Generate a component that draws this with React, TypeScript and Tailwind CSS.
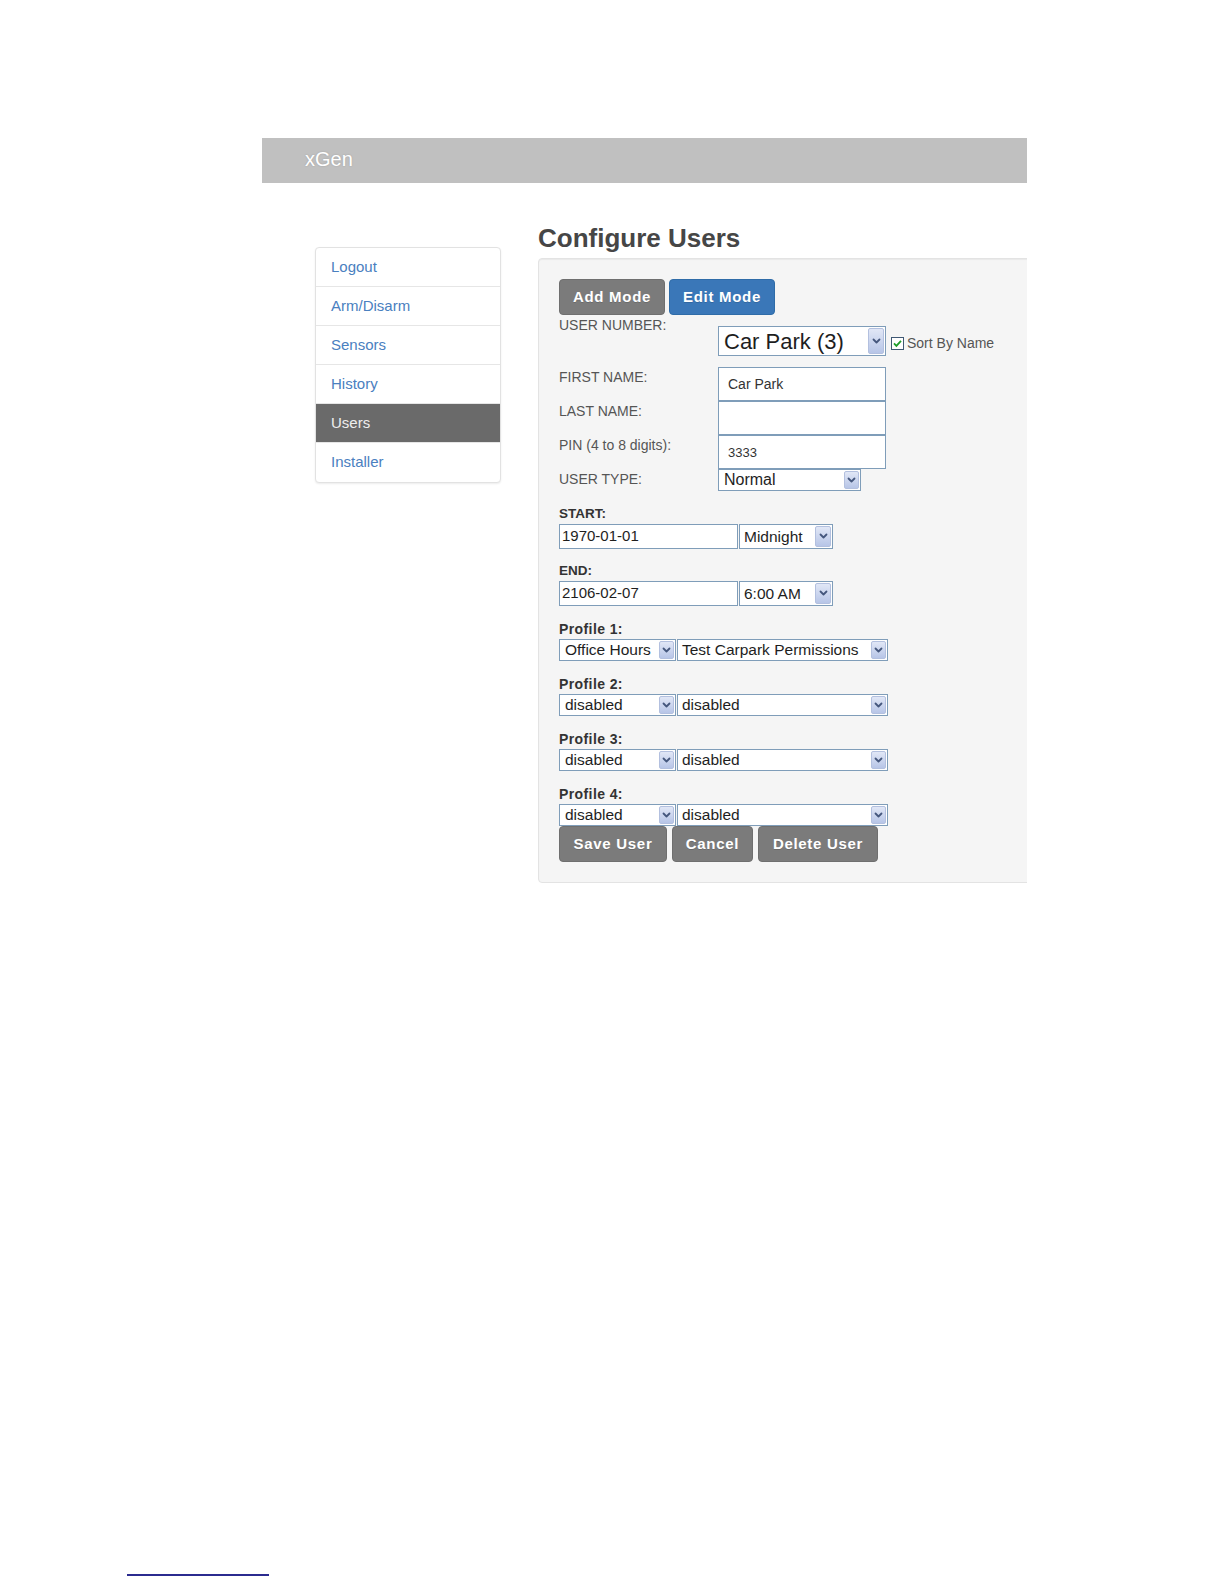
import React from "react";

const Arrow = ({ className }: { className: string }) => (
  <div
    className={`flex items-center justify-center rounded-[2px] border border-[#b3c0df] bg-linear-to-b from-[#e1e7f6] to-[#b7c5e7] ${className}`}
  >
    <svg width="9" height="7" viewBox="0 0 9 7">
      <path
        d="M1.5 1.5 L4.5 4.5 L7.5 1.5"
        fill="none"
        stroke="#45577d"
        strokeWidth="1.8"
        strokeLinecap="round"
        strokeLinejoin="round"
      />
    </svg>
  </div>
);

function Sel({
  className,
  text,
  textClass,
  arrowClass,
}: {
  className: string;
  text: string;
  textClass: string;
  arrowClass: string;
}) {
  return (
    <div className={`flex items-stretch border border-[#7f9db9] bg-white p-px ${className}`}>
      <div className={`flex flex-1 items-center overflow-hidden whitespace-nowrap text-[#1e1e1e] ${textClass}`}>
        {text}
      </div>
      <Arrow className={arrowClass} />
    </div>
  );
}

const Btn = ({ children, className }: { children: React.ReactNode; className: string }) => (
  <div
    className={`flex items-center justify-center rounded-[4px] text-[15px] font-bold tracking-[0.7px] text-white [text-shadow:0_1px_0_rgba(0,0,0,0.15)] ${className}`}
  >
    {children}
  </div>
);

const navItems = ["Logout", "Arm/Disarm", "Sensors", "History", "Users", "Installer"];

function ProfileBlock({ label, a, b }: { label: string; a: string; b: string }) {
  return (
    <div className="mt-[13px]">
      <div className="h-[20px] text-[14px] font-bold leading-[20px] tracking-[0.4px] text-[#333]">{label}</div>
      <div className="flex gap-px">
        <Sel className="h-[22px] w-[117px]" text={a} textClass="pl-[4px] text-[15.5px]" arrowClass="w-[15px]" />
        <Sel className="h-[22px] w-[211px]" text={b} textClass="pl-[3px] text-[15.5px]" arrowClass="w-[15px]" />
      </div>
    </div>
  );
}

function DateBlock({ label, date, time, first }: { label: string; date: string; time: string; first?: boolean }) {
  return (
    <div className={first ? "mt-[13px]" : "mt-[12px]"}>
      <div className="h-[20px] text-[13.5px] font-bold leading-[20px] text-[#333]">{label}</div>
      <div className="flex gap-px">
        <div className="flex h-[25px] w-[179px] items-center border border-[#7f9db9] bg-white pl-[2px] text-[15px] text-[#1e1e1e]">
          {date}
        </div>
        <Sel className="h-[25px] w-[94px]" text={time} textClass="pl-[3px] text-[15.5px]" arrowClass="w-[16px]" />
      </div>
    </div>
  );
}

function InputRow({ label, value, valueClass }: { label: string; value: string; valueClass: string }) {
  return (
    <div className="flex">
      <div className="w-[159px] text-[14px] leading-[20px] text-[#555]">{label}</div>
      <div
        className={`flex h-[34px] w-[168px] items-center border border-[#7f9db9] bg-white pl-[9px] text-[#333] ${valueClass}`}
      >
        {value}
      </div>
    </div>
  );
}

export default function App() {
  return (
    <div className="flex h-[1584px] flex-col bg-white font-['Liberation_Sans',Arial,sans-serif]">
      <div className="ml-[262px] mt-[138px] w-[765px] overflow-hidden">
        <div className="h-[45px] bg-[#c0c0c0] pl-[43px] pt-[11px] text-[20px] leading-[20px] text-white [text-shadow:0_0_2px_rgba(0,0,0,0.18)]">
          xGen
        </div>
        <div className="flex items-start pl-[53px]">
          <nav className="mt-[64px] w-[186px] shrink-0 overflow-hidden rounded-[4px] border border-[#e2e2e2] bg-white shadow-[0_1px_2px_rgba(0,0,0,0.08)]">
            {navItems.map((t, i) => (
              <div
                key={t}
                className={`flex h-[39px] items-center pl-[15px] text-[15px] ${
                  i < navItems.length - 1 ? "border-b border-[#e6e6e6]" : ""
                } ${t === "Users" ? "bg-[#6a6a6a] text-[#eeeeee]" : "text-[#4a80c0]"}`}
              >
                {t}
              </div>
            ))}
          </nav>
          <main className="ml-[37px] mt-[39px] w-[540px] shrink-0">
            <h2 className="text-[26px] font-bold leading-[32px] text-[#464646]">Configure Users</h2>
            <div className="mt-[4px] rounded-[4px] border border-[#e3e3e3] bg-[#f5f5f5] px-[20px] pb-[20px] pt-[20px] shadow-[inset_0_1px_1px_rgba(0,0,0,0.05)]">
              <div className="flex gap-[4px]">
                <Btn className="h-[36px] w-[106px] border border-[#6f6f6f] bg-[#7b7b7b]">Add Mode</Btn>
                <Btn className="h-[36px] w-[106px] border border-[#2f6ca8] bg-[#3a77b8]">Edit Mode</Btn>
              </div>

              <div className="flex h-[52px]">
                <div className="w-[159px] text-[14px] leading-[20px] text-[#555]">USER NUMBER:</div>
                <div className="mt-[11px] flex h-[30px] items-center">
                  <Sel className="h-[30px] w-[168px]" text="Car Park (3)" textClass="pl-[4px] text-[22px]" arrowClass="w-[16px]" />
                  <div className="ml-[5px] mt-[4px] flex items-center">
                    <svg width="13" height="13" viewBox="0 0 13 13">
                      <rect x="0.5" y="0.5" width="12" height="12" fill="#fff" stroke="#3f5873" />
                      <path d="M3 6.4 L5.4 8.9 L10 3.9" fill="none" stroke="#1f9e2a" strokeWidth="1.8" />
                    </svg>
                    <span className="ml-[3px] text-[14px] text-[#555]">Sort By Name</span>
                  </div>
                </div>
              </div>

              <InputRow label="FIRST NAME:" value="Car Park" valueClass="text-[14px]" />
              <InputRow label="LAST NAME:" value="" valueClass="text-[14px]" />
              <InputRow label="PIN (4 to 8 digits):" value="3333" valueClass="text-[13px] pt-[2px]" />

              <div className="flex">
                <div className="w-[159px] text-[14px] leading-[20px] text-[#555]">USER TYPE:</div>
                <Sel className="h-[22px] w-[143px]" text="Normal" textClass="pl-[4px] text-[16px]" arrowClass="w-[15px]" />
              </div>

              <DateBlock label="START:" date="1970-01-01" time="Midnight" first />
              <DateBlock label="END:" date="2106-02-07" time="6:00 AM" />

              <ProfileBlock label="Profile 1:" a="Office Hours" b="Test Carpark Permissions" />
              <ProfileBlock label="Profile 2:" a="disabled" b="disabled" />
              <ProfileBlock label="Profile 3:" a="disabled" b="disabled" />
              <ProfileBlock label="Profile 4:" a="disabled" b="disabled" />

              <div className="flex gap-[5px]">
                <Btn className="h-[36px] w-[108px] border border-[#6f6f6f] bg-[#7b7b7b]">Save User</Btn>
                <Btn className="h-[36px] w-[81px] border border-[#6f6f6f] bg-[#7b7b7b]">Cancel</Btn>
                <Btn className="h-[36px] w-[120px] border border-[#6f6f6f] bg-[#7b7b7b]">Delete User</Btn>
              </div>
            </div>
          </main>
        </div>
      </div>
      <div className="mb-[8px] ml-[127px] mt-auto h-[2px] w-[142px] bg-[#2b2b8f]" />
    </div>
  );
}
